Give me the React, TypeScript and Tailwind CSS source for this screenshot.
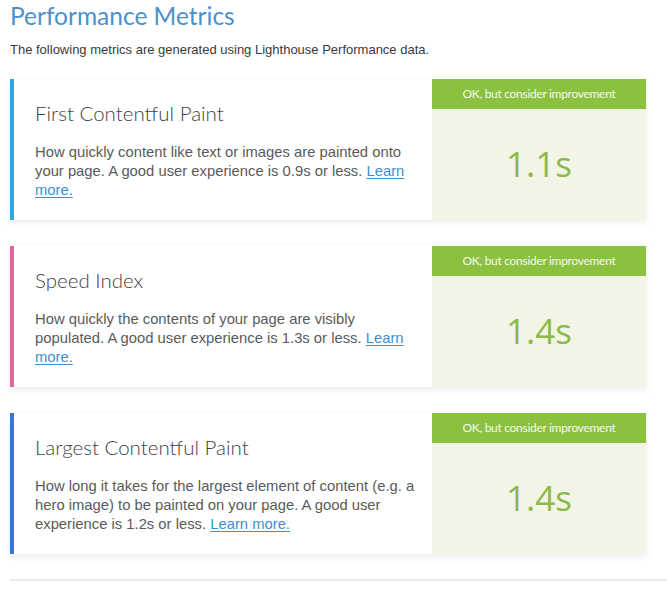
import React from "react";

type Metric = {
  title: string;
  body: React.ReactNode;
  value: string;
  accent: string;
};

const link = (text: string) => (
  <a href="#" className="text-[#3e8fcf] underline underline-offset-2">
    {text}
  </a>
);

const metrics: Metric[] = [
  {
    title: "First Contentful Paint",
    body: (
      <>
        How quickly content like text or images are painted onto your page. A good user experience is 0.9s or less.{" "}
        {link("Learn more.")}
      </>
    ),
    value: "1.1s",
    accent: "border-l-[#2aa9e0]",
  },
  {
    title: "Speed Index",
    body: (
      <>
        How quickly the contents of your page are visibly populated. A good user experience is 1.3s or less.{" "}
        {link("Learn more.")}
      </>
    ),
    value: "1.4s",
    accent: "border-l-[#e2679f]",
  },
  {
    title: "Largest Contentful Paint",
    body: (
      <>
        How long it takes for the largest element of content (e.g. a hero image) to be painted on your page. A good user
        experience is 1.2s or less. {link("Learn more.")}
      </>
    ),
    value: "1.4s",
    accent: "border-l-[#3b76d6]",
  },
];

function MetricCard({ m }: { m: Metric }) {
  return (
    <div
      className={`flex h-[141px] w-[636px] border-l-4 bg-white shadow-[0_2px_8px_rgba(0,0,0,0.09)] ${m.accent}`}
    >
      <div className="flex flex-1 flex-col justify-center pl-[21px] pr-[14px]">
        <h3 className="font-['Lato',sans-serif] text-[20.5px] font-light leading-[26px] text-[#3f3f3f]">{m.title}</h3>
        <p className="mt-[17px] font-['Liberation_Sans',Arial,sans-serif] text-[14.8px] leading-[19px] text-[#5a5a5a]">
          {m.body}
        </p>
      </div>
      <div className="flex w-[214px] flex-col bg-[#f2f5e6]">
        <div className="flex h-[30px] items-center justify-center bg-[#8cc13f] font-['Lato',sans-serif] text-[12px] tracking-[-0.3px] text-[#f4f9ea]">
          OK, but consider improvement
        </div>
        <div className="flex flex-1 items-center justify-center font-['Open_Sans',sans-serif] text-[35px] text-[#8db94c]">
          {m.value}
        </div>
      </div>
    </div>
  );
}

export default function App() {
  return (
    <div className="min-h-[599px] w-[667px] overflow-hidden bg-white pl-[10px]">
      <h2 className="pt-[1px] font-['Lato',sans-serif] text-[24.5px] leading-[30px] text-[#4b90cd]">
        Performance Metrics
      </h2>
      <p className="mt-[11px] font-['Liberation_Sans',Arial,sans-serif] text-[13px] leading-[16px] text-[#3a3a3a]">
        The following metrics are generated using Lighthouse Performance data.
      </p>
      <div className="mt-[21px] flex flex-col gap-[26px]">
        {metrics.map((m) => (
          <MetricCard key={m.title} m={m} />
        ))}
      </div>
      <div className="mt-[25px] h-[2px] bg-[#ececec]" />
    </div>
  );
}
